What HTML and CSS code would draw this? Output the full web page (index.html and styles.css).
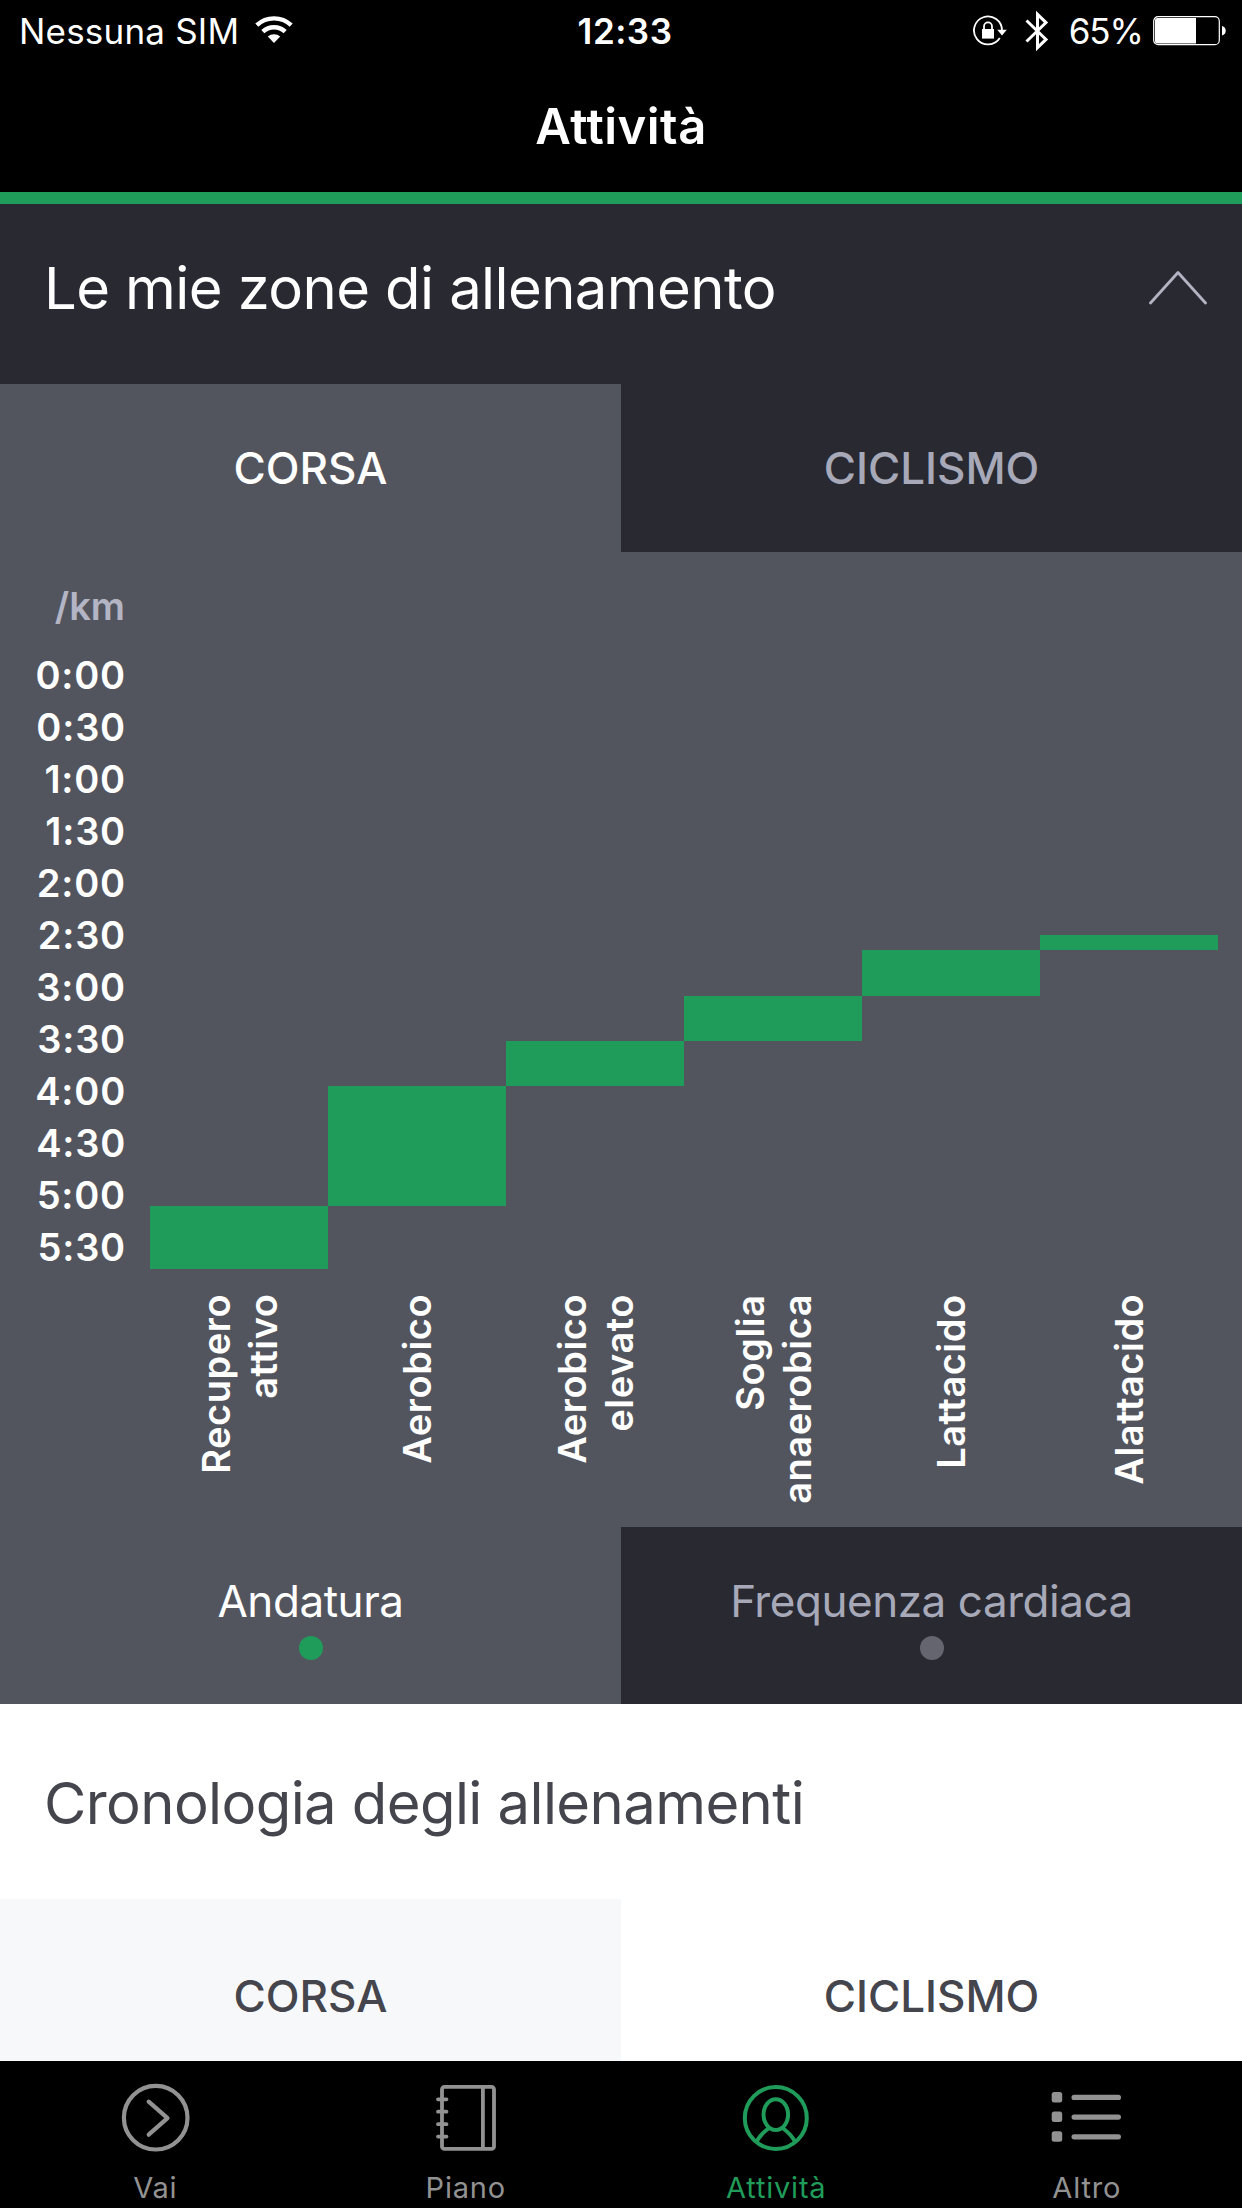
FILE: index.html
```
<!DOCTYPE html>
<html lang="it">
<head>
    <meta charset="UTF-8">
    <meta name="viewport" content="width=device-width, initial-scale=1.0">
    <title>Attività</title>
    <link rel="stylesheet" href="styles.css">
</head>
<body>
    <div class="app">
        <div class="status-bar">
            <div class="status-left">
                <span class="carrier">Nessuna SIM</span>
                <svg class="wifi-icon" width="38" height="28" viewBox="0 0 38 28">
                    <g fill="none" stroke="#fff" stroke-width="4.4">
                        <path d="M1.8 9.2a25 25 0 0 1 34.4 0"/>
                        <path d="M7.8 15.6a16.4 16.4 0 0 1 22.4 0"/>
                    </g>
                    <path fill="#fff" d="M12.8 20.6a9.6 9.6 0 0 1 12.4 0L19 27z"/>
                </svg>
            </div>
            <div class="status-time">12:33</div>
            <div class="status-right">
                <svg class="lock-icon" width="36" height="32" viewBox="0 0 36 32">
                    <path fill="none" stroke="#fff" stroke-width="1.8" d="M29 15.5A14 14 0 1 0 26.8 23"/>
                    <path fill="#fff" d="M24.2 14.8h9.6L29 20.4z"/>
                    <path fill="#fff" d="M9 14h12v9.6H9z"/>
                    <path fill="none" stroke="#fff" stroke-width="1.8" d="M11 15v-3.6a4 4 0 0 1 8 0V15"/>
                </svg>
                <svg class="bluetooth-icon" width="24" height="42" viewBox="0 0 24 42">
                    <path fill="none" stroke="#fff" stroke-width="3" d="M1.5 10.500L21 29.400l-8.500 8.200V4.400L21 12.600 1.500 31.500"/>
                </svg>
                <span class="battery-level">65%</span>
                <svg class="battery-icon" width="74" height="30" viewBox="0 0 74 30">
                    <rect x="0.7" y="0.7" width="65.6" height="28" rx="4.5" fill="none" stroke="#fff" stroke-width="1.2"/>
                    <path fill="#fff" d="M4.5 2H43v25.4H4.5A2.5 2.5 0 0 1 2 24.900V4.500A2.500 2.500 0 0 1 4.500 2z"/>
                    <path fill="#fff" d="M69 10c5 1 5 8.500 0 9.500z"/>
                </svg>
            </div>
        </div>

        <div class="nav-bar">
            <h1>Attività</h1>
        </div>

        <div class="section-header">
            <h2>Le mie zone di allenamento</h2>
            <svg class="chevron" width="58" height="36" viewBox="0 0 58 36">
                <path d="M1.5 33L29 2.5 56.5 33" fill="none" stroke="#b3b4c3" stroke-width="2.8" stroke-linecap="round" stroke-linejoin="round"/>
            </svg>
        </div>

        <div class="tabs">
            <div class="tab active">CORSA</div>
            <div class="tab">CICLISMO</div>
        </div>

        <div class="chart">
            <div class="chart-unit">/km</div>
            <div class="chart-body">
                <div class="axis">
                    <span>0:00</span>
                    <span>0:30</span>
                    <span>1:00</span>
                    <span>1:30</span>
                    <span>2:00</span>
                    <span>2:30</span>
                    <span>3:00</span>
                    <span>3:30</span>
                    <span>4:00</span>
                    <span>4:30</span>
                    <span>5:00</span>
                    <span>5:30</span>
                </div>
                <div class="zones">
                    <div class="zone"><div class="bar" style="margin-top: 557px; height: 63px"></div></div>
                    <div class="zone"><div class="bar" style="margin-top: 437px; height: 120px"></div></div>
                    <div class="zone"><div class="bar" style="margin-top: 392px; height: 45px"></div></div>
                    <div class="zone"><div class="bar" style="margin-top: 347px; height: 45px"></div></div>
                    <div class="zone"><div class="bar" style="margin-top: 301px; height: 46px"></div></div>
                    <div class="zone"><div class="bar" style="margin-top: 286px; height: 15px"></div></div>
                </div>
            </div>
            <div class="zone-labels">
                <div class="zone-label"><span>Recupero<br>attivo</span></div>
                <div class="zone-label"><span>Aerobico</span></div>
                <div class="zone-label"><span>Aerobico<br>elevato</span></div>
                <div class="zone-label"><span>Soglia<br>anaerobica</span></div>
                <div class="zone-label"><span>Lattacido</span></div>
                <div class="zone-label"><span>Alattacido</span></div>
            </div>
        </div>

        <div class="metric-tabs">
            <div class="metric-tab active">
                <span>Andatura</span>
                <div class="dot"></div>
            </div>
            <div class="metric-tab">
                <span>Frequenza cardiaca</span>
                <div class="dot"></div>
            </div>
        </div>

        <div class="history">
            <h2>Cronologia degli allenamenti</h2>
            <div class="history-tabs">
                <div class="history-tab active">CORSA</div>
                <div class="history-tab">CICLISMO</div>
            </div>
        </div>

        <div class="tab-bar">
            <div class="tab-item">
                <svg width="72" height="72" viewBox="0 0 72 72" fill="none" stroke="#929292" stroke-width="4.2" stroke-linecap="round" stroke-linejoin="round">
                    <circle cx="36.7" cy="35.7" r="31.8"/>
                    <path d="M29.7 19.7L48.5 36.2 29.7 52.7"/>
                </svg>
                <span>Vai</span>
            </div>
            <div class="tab-item">
                <svg width="72" height="72" viewBox="0 0 72 72" fill="none" stroke="#929292" stroke-width="3.8" stroke-linecap="round">
                    <rect x="12" y="4.9" width="52" height="62" rx="2.5"/>
                    <path d="M52.9 5v62" stroke-linecap="butt"/>
                    <path d="M8 17.3h8.500M8 29.700h8.500M8 42.200h8.500M8 54.600h8.500"/>
                </svg>
                <span>Piano</span>
            </div>
            <div class="tab-item active">
                <svg width="72" height="72" viewBox="0 0 72 72" fill="none" stroke="#209c5a" stroke-width="4">
                    <circle cx="35.8" cy="36" r="31"/>
                    <ellipse cx="35.8" cy="32.6" rx="12.3" ry="15.3"/>
                    <path d="M29 46C23 50.5 18.5 55.5 16.5 60M42.600 46C48.600 50.500 53.100 55.500 55.100 60"/>
                </svg>
                <span>Attività</span>
            </div>
            <div class="tab-item">
                <svg width="72" height="72" viewBox="0 0 72 72" fill="#929292">
                    <rect x="0.7" y="10" width="10.5" height="10.5" rx="2.5"/>
                    <rect x="0.7" y="29.6" width="10.5" height="10.5" rx="2.5"/>
                    <rect x="0.7" y="49.2" width="10.5" height="10.5" rx="2.5"/>
                    <rect x="20.5" y="12.8" width="49.5" height="5.2" rx="2.6"/>
                    <rect x="20.5" y="32.5" width="49.5" height="5.2" rx="2.6"/>
                    <rect x="20.5" y="52.2" width="49.5" height="5.2" rx="2.6"/>
                </svg>
                <span>Altro</span>
            </div>
        </div>
    </div>
</body>
</html>
```
FILE: styles.css
```
* {
    margin: 0;
    padding: 0;
    box-sizing: border-box;
}

body {
    font-family: Inter, "Liberation Sans", sans-serif;
    background: #000;
    color: #fff;
}

svg {
    display: block;
    flex-shrink: 0;
}

.app {
    width: 1242px;
    height: 2208px;
    overflow: hidden;
    display: flex;
    flex-direction: column;
}

/* Status bar */
.status-bar {
    height: 62px;
    display: grid;
    grid-template-columns: 1fr auto 1fr;
    align-items: center;
    padding: 0 15px 0 19px;
    font-size: 35px;
    background: #000;
}

.status-left,
.status-right {
    display: flex;
    align-items: center;
}

.status-right {
    justify-content: flex-end;
}

.carrier {
    letter-spacing: 0.2px;
}

.wifi-icon {
    margin-left: 16px;
    margin-bottom: 3px;
}

.status-time {
    padding-left: 4px;
    font-weight: 600;
    letter-spacing: 0.5px;
}

.bluetooth-icon {
    margin-left: 16px;
}

.battery-level {
    margin-left: 20px;
    letter-spacing: -1px;
}

.battery-icon {
    margin-left: 10px;
}

/* Navigation bar */
.nav-bar {
    height: 142px;
    padding-bottom: 2px;
    display: flex;
    align-items: center;
    justify-content: center;
    background: #000;
    border-bottom: 12px solid #209c5a;
}

.nav-bar h1 {
    font-size: 49px;
    font-weight: 600;
    letter-spacing: 0.5px;
}

/* Training zones */
.section-header {
    height: 180px;
    padding: 0 35px 12px 44px;
    display: flex;
    align-items: center;
    justify-content: space-between;
    background: #292932;
}

.section-header h2,
.history h2 {
    font-size: 58px;
    font-weight: 400;
    letter-spacing: -0.6px;
}

.tabs {
    height: 168px;
    display: grid;
    grid-template-columns: 1fr 1fr;
}

.tab {
    display: flex;
    align-items: center;
    justify-content: center;
    background: #292932;
    color: #a7a9b8;
    font-size: 44px;
    font-weight: 500;
}

.tab.active {
    background: #53555e;
    color: #fff;
}

/* Pace chart */
.chart {
    height: 975px;
    padding: 28px 24px 0 0;
    background: #53555e;
    font-size: 38px;
    font-weight: 600;
}

.chart-unit {
    width: 125px;
    line-height: 52px;
    text-align: right;
    color: #b3b5c5;
}

.chart-body {
    display: flex;
    height: 640px;
    margin-top: 17px;
}

.axis {
    width: 150px;
    padding-right: 24px;
    display: flex;
    flex-direction: column;
    text-align: right;
    line-height: 52px;
    letter-spacing: 0.8px;
}

.zones {
    flex: 1;
    display: grid;
    grid-template-columns: repeat(6, 1fr);
}

.bar {
    background: #209c5a;
}

.zone-labels {
    margin-left: 150px;
    margin-top: 5px;
    display: grid;
    grid-template-columns: repeat(6, 1fr);
}

.zone-label {
    display: flex;
    justify-content: center;
}

/* Bottom-to-top text, aligned to the upper edge */
.zone-label span {
    writing-mode: vertical-rl;
    transform: rotate(180deg);
    text-align: right;
    line-height: 46.5px;
    letter-spacing: 0.5px;
}

/* Pace / heart rate switch */
.metric-tabs {
    height: 177px;
    display: grid;
    grid-template-columns: 1fr 1fr;
}

.metric-tab {
    display: flex;
    flex-direction: column;
    align-items: center;
    padding-top: 46px;
    background: #292932;
    color: #a7a9b8;
    font-size: 44px;
    line-height: 56px;
    letter-spacing: -0.45px;
}

.metric-tab.active {
    background: #53555e;
    color: #fff;
}

.dot {
    width: 24px;
    height: 24px;
    margin-top: 7px;
    border-radius: 50%;
    background: #65656f;
}

.metric-tab.active .dot {
    background: #209c5a;
}

/* Workout history */
.history {
    background: #fff;
    color: #44454d;
}

.history h2 {
    height: 195px;
    padding-left: 44px;
    line-height: 199px;
}

.history-tabs {
    height: 162px;
    display: grid;
    grid-template-columns: 1fr 1fr;
}

.history-tab {
    padding-top: 32px;
    display: flex;
    align-items: center;
    justify-content: center;
    font-size: 44px;
    font-weight: 500;
}

.history-tab.active {
    background: #f7f8fa;
}

/* Bottom tab bar */
.tab-bar {
    height: 147px;
    padding-top: 21px;
    display: grid;
    grid-template-columns: repeat(4, 1fr);
    background: #000;
    color: #929292;
    font-size: 29px;
}

.tab-item {
    display: flex;
    flex-direction: column;
    align-items: center;
}

.tab-item span {
    margin-top: 16px;
    line-height: 36px;
    letter-spacing: 0.8px;
}

.tab-item.active {
    color: #209c5a;
}
```
